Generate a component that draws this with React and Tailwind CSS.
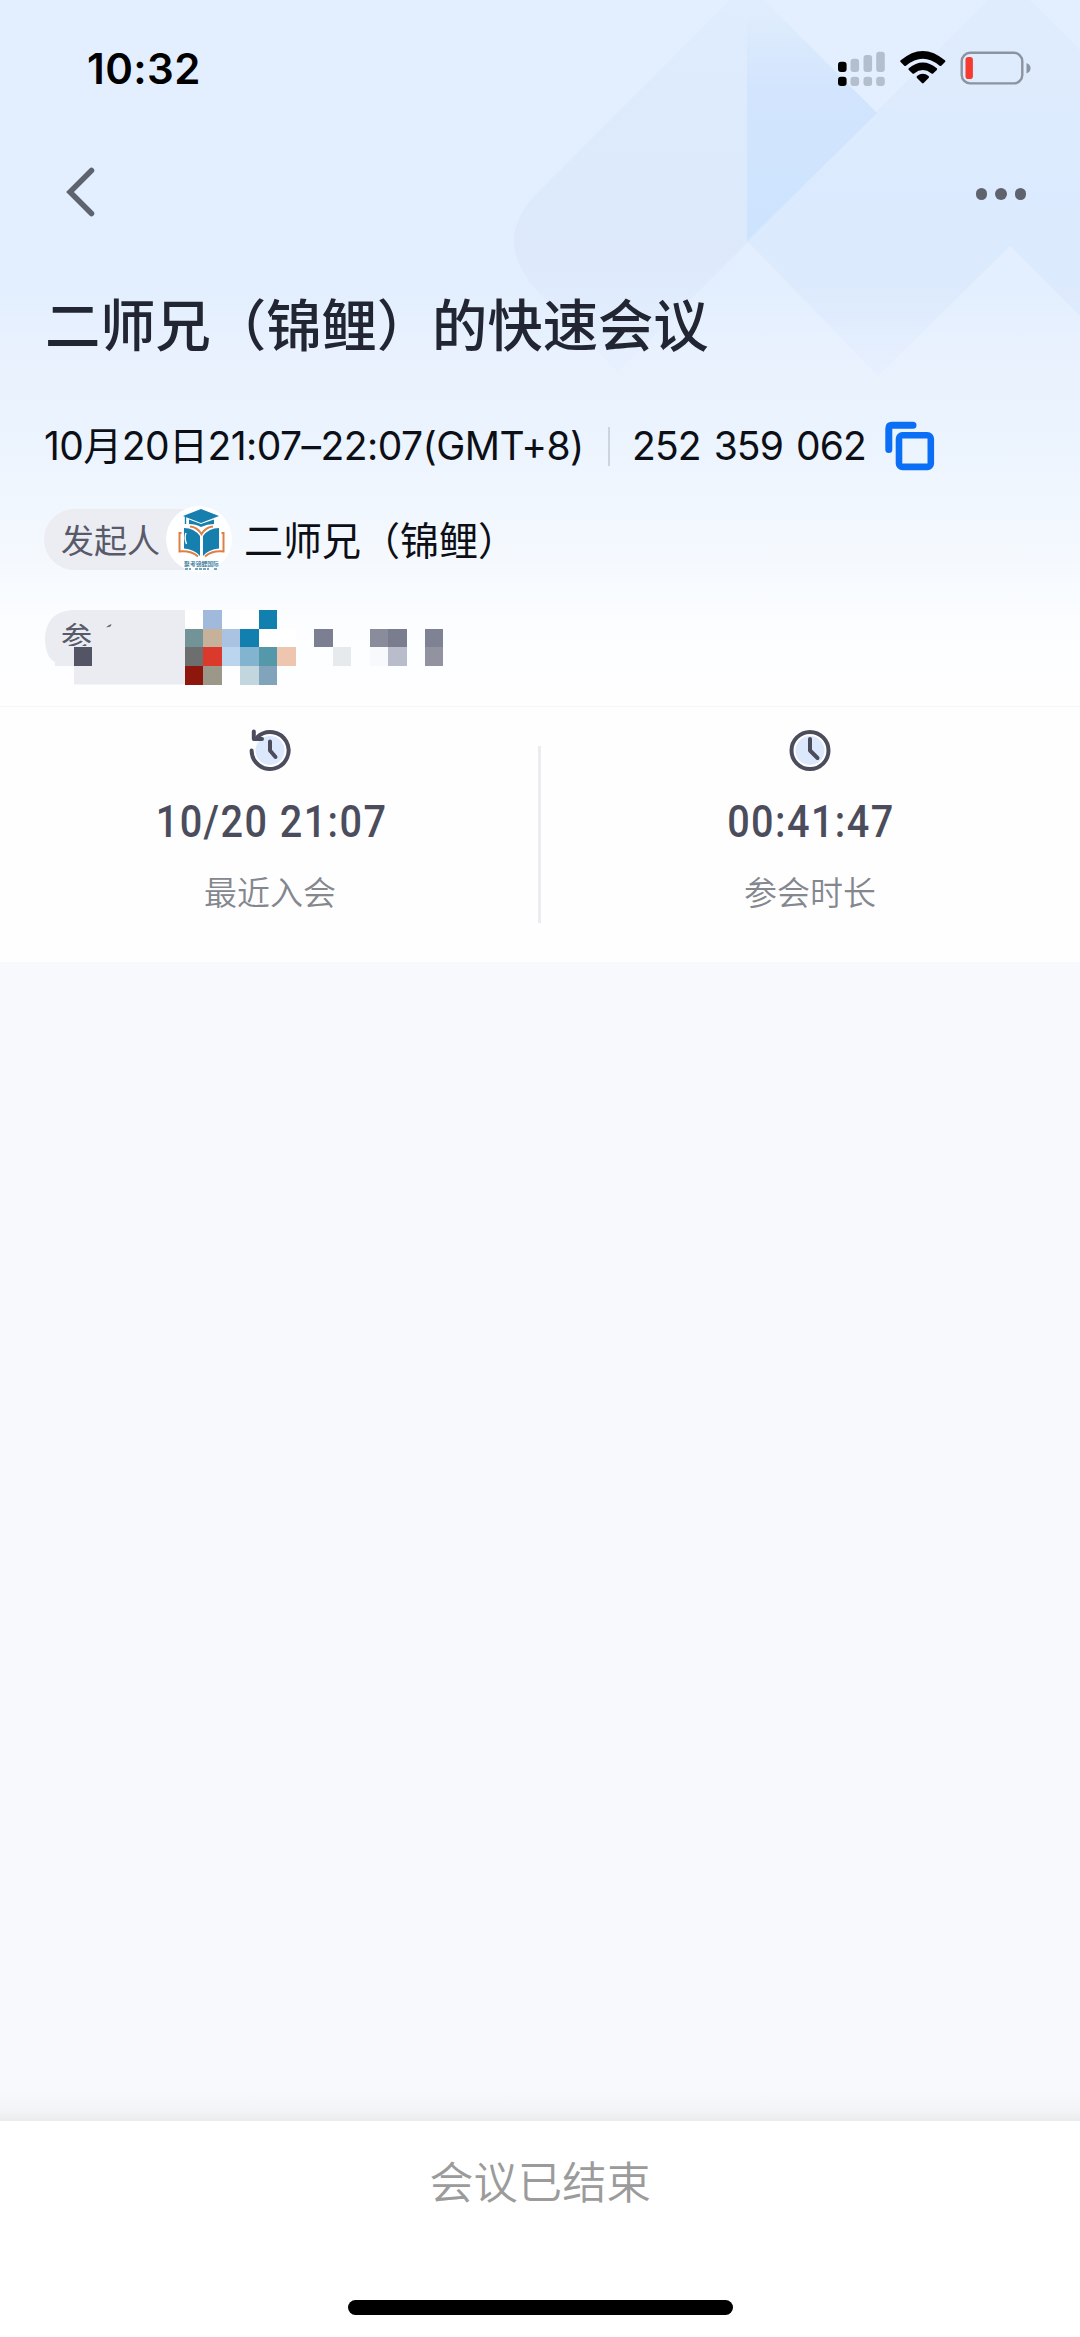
const INK = "#4b4d5c";

function Backdrop() {
  return (
    <svg className="absolute inset-0 h-full w-full" viewBox="0 0 1080 706" fill="none">
      <defs>
        <linearGradient id="band" x1="0" y1="0" x2="0" y2="390" gradientUnits="userSpaceOnUse">
          <stop offset="0" stopColor="#d8e8fb" stopOpacity="0.35" />
          <stop offset="0.25" stopColor="#d8e7fa" stopOpacity="0.55" />
          <stop offset="0.65" stopColor="#d8e5f9" stopOpacity="0.55" />
          <stop offset="0.95" stopColor="#e0edfd" stopOpacity="0.35" />
          <stop offset="1" stopColor="#e4effe" stopOpacity="0" />
        </linearGradient>
        <linearGradient id="bandRight" x1="0" y1="0" x2="0" y2="385" gradientUnits="userSpaceOnUse">
          <stop offset="0" stopColor="#d8e8fb" stopOpacity="0.4" />
          <stop offset="0.5" stopColor="#d6e7fe" stopOpacity="0.6" />
          <stop offset="0.75" stopColor="#d8e7fc" stopOpacity="0.6" />
          <stop offset="1" stopColor="#e2edfe" stopOpacity="0.35" />
        </linearGradient>
        <linearGradient id="facet" x1="0" y1="15" x2="0" y2="241" gradientUnits="userSpaceOnUse">
          <stop offset="0" stopColor="#d0e4fd" stopOpacity="0" />
          <stop offset="0.35" stopColor="#d0e3fe" stopOpacity="0.85" />
          <stop offset="1" stopColor="#cde4fe" />
        </linearGradient>
      </defs>
      <path d="M730 0H764L877 113L618 372L538 292Q490 240 538 192Z" fill="url(#band)" />
      <path d="M988 0H1030L1080 50V316L1010 246L878 376L747 241Z" fill="url(#bandRight)" />
      <path d="M747 0H764L877 113L747 241Z" fill="url(#facet)" />
    </svg>
  );
}

function StatusIcons() {
  const bars = [
    [837.5, 61.7],
    [850, 58.7],
    [863, 55],
    [875.7, 51.7],
  ];
  return (
    <svg className="h-10 w-[200px]" viewBox="834.5 48 200 40" fill="none">
      {bars.map(([x, y], i) => (
        <g key={x} fill={i === 0 ? "#000" : "#b3bfcd"}>
          <rect x={x} y={y} width="8.6" height={72 - y} rx="3" />
          <rect x={x} y="76.7" width="8.6" height="9.3" rx="3" />
        </g>
      ))}
      <path d="M900.2 60.3Q922.3 41.5 944.4 60.3Q945.3 61.2 944.5 62L940.8 65.7Q940 66.5 939.1 65.7Q922.3 51.8 905.5 65.7Q904.6 66.5 903.8 65.7L900.1 62Q899.3 61.2 900.2 60.3Z" fill="#000" />
      <path d="M908.3 68.3Q922.3 56.5 936.3 68.3Q937.1 69.1 936.3 69.9L932.6 73.4Q931.8 74.1 931 73.4Q922.3 66.5 913.6 73.4Q912.8 74.1 912 73.4L908.3 69.9Q907.5 69.1 908.3 68.3Z" fill="#000" />
      <path d="M916.5 76.1Q922.3 71.4 928.1 76.1Q929 77 928.1 77.9L923.1 83Q922.3 83.8 921.5 83L916.5 77.9Q915.6 77 916.5 76.1Z" fill="#000" />
      <rect x="961.2" y="52.8" width="60.6" height="30.6" rx="8.5" stroke="#8b93a0" strokeWidth="2.4" />
      <rect x="965" y="57" width="7.4" height="22" rx="2.8" fill="#f63a30" />
      <path d="M1026 63Q1030 64.5 1030 68.2T1026 73.4Z" fill="#8b93a0" />
    </svg>
  );
}

function CopyIcon() {
  return (
    <svg className="h-[50px] w-[50px]" viewBox="0 0 50 50" fill="none" stroke="#0b6ff6">
      <path d="M3.8 28.5V7.4Q3.8 4.3 6.9 4.3H28" strokeWidth="7" strokeLinecap="round" />
      <rect x="14" y="14.3" width="31.8" height="31.6" rx="3.5" strokeWidth="6.6" />
    </svg>
  );
}

function AvatarLogo() {
  return (
    <svg className="h-[66px] w-[66px] shrink-0" viewBox="0 0 66 66">
      <circle cx="33" cy="33" r="33" fill="#fff" />
      <path d="M35 3L53 10L35 17L17 10Z" fill="#177fae" />
      <path d="M23 13.5L35 18L48 13.5V18Q41 18 35 21Q30 18 23 18Z" fill="#177fae" />
      <path d="M19.5 10.5V18" stroke="#177fae" strokeWidth="1.4" />
      <path d="M18 22Q28 22 34 30V50Q28 43 18 42.5Z" fill="#177fae" />
      <path d="M53 22Q43 22 37 30V50Q43 43 53 42.5Z" fill="#177fae" />
      <path d="M20 27Q18 32 20.5 38" stroke="#fff" strokeWidth="1.4" fill="none" />
      <path d="M24 20.5Q31 21 35.5 28Q40 21 47 20.5" stroke="#dd8044" strokeWidth="2.2" fill="none" />
      <path d="M15.5 27H13.5V45.5Q25 44.5 32 50.5M55.5 27H57.5V45.5Q46 44.5 39 50.5" stroke="#dd8044" strokeWidth="2" fill="none" />
      <text x="35.5" y="60" textAnchor="middle" fontSize="5.8" fontWeight="500" fill="#2a6f94" fontFamily="Noto Sans CJK SC">聚考锦鲤国际</text>
      <path d="M19 63H25M29 63H43M48 63H51" stroke="#4b86a3" strokeWidth="1.4" strokeDasharray="3 1" />
    </svg>
  );
}

function ClockIcon({ history }) {
  return (
    <svg className="h-[46px] w-[46px]" viewBox="0 0 46 46" fill="none" stroke={INK} strokeWidth="4" strokeLinecap="round" strokeLinejoin="round">
      <circle cx="23" cy="23.5" r="14.5" fill="#dce9fd" stroke="none" />
      {history ? (
        <>
          <path d="M4.6 23.5A18.5 18.5 0 1 0 10.5 9.9" />
          <path d="M6.8 4.5V12H15" />
          <path d="M23 14.5V23.5L28.5 30" />
        </>
      ) : (
        <>
          <circle cx="23" cy="23.5" r="18.5" />
          <path d="M23 12V23.5L30.5 31" />
        </>
      )}
    </svg>
  );
}

/* Pixelated cells: [column, row, colour] on an 18.46px grid */
const CELLS = [
  [0, 0, "#ffffff"], [1, 0, "#a1b9db"], [2, 0, "#fdfeff"], [3, 0, "#ffffff"], [4, 0, "#1180ae"],
  [0, 1, "#729498"], [1, 1, "#c6b29b"], [2, 1, "#abc3e3"], [3, 1, "#1180ae"], [4, 1, "#ffffff"], [5, 1, "#ffffff"],
  [7, 1, "#7c7f91"], [10, 1, "#888c9b"], [11, 1, "#797d8d"], [13, 1, "#7f8292"],
  [0, 2, "#6d6e6e"], [1, 2, "#dc392d"], [2, 2, "#bad5ed"], [3, 2, "#82b4cf"], [4, 2, "#5498aa"], [5, 2, "#eec5ae"],
  [8, 2, "#e7eaec"], [10, 2, "#f8f9fc"], [11, 2, "#b9bcca"], [13, 2, "#9193a0"],
  [0, 3, "#8e170d"], [1, 3, "#9b988a"], [3, 3, "#c2d6de"], [4, 3, "#81a3bb"],
];

function ParticipantRow() {
  return (
    <div className="mt-[38px] ml-11 flex h-[75px]">
      <div className="relative h-[75px] w-[141px]">
        <svg className="absolute inset-0 h-full w-full" viewBox="0 0 141 75">
          <path d="M141 0H27Q1 3 1 30Q2 48 11 52V56H30V74.5H141Z" fill="#ebecf1" />
          <path d="M62 17.5Q64 15 67.5 14L66.5 16.5Z" fill="#5b5d6a" />
        </svg>
        <div className="absolute top-[9px] left-[17px] text-[31px] leading-[37px] text-[#585a69]">参</div>
        <div className="absolute top-[36px] left-[14px] h-[16px] w-10 bg-[#ebecf1]" />
        <div className="absolute top-[37px] left-[30px] h-[19px] w-[18px] bg-[#535565]" />
      </div>
      <svg className="h-[75px] w-[259px]" viewBox="0 0 259 75" shapeRendering="crispEdges">
        {CELLS.map(([c, r, fill]) => (
          <rect key={`${c}-${r}`} x={c * 18.46} y={r * 18.6} width="18.5" height="18.7" fill={fill} />
        ))}
      </svg>
    </div>
  );
}

function Stat({ history, value, label }) {
  return (
    <div className="flex flex-1 flex-col items-center pt-[20px]">
      <ClockIcon history={history} />
      <div className="mt-6 h-[50px] origin-center scale-x-[0.9] pl-[3px] font-['Roboto',sans-serif] text-[44px] leading-[50px] font-medium tracking-[1.6px] whitespace-nowrap text-[#4b4d5c]">{value}</div>
      <div className="mt-[26px] h-10 text-[33px] leading-10 font-[350] text-[#85878f]">{label}</div>
    </div>
  );
}

export default function App() {
  return (
    <div className="flex h-[2337px] w-[1080px] flex-col overflow-hidden bg-[#f7f9fc] font-['Inter','Noto_Sans_CJK_SC',sans-serif]">
      <header className="relative h-[706px] bg-[linear-gradient(#e3effe_0px,#e3effe_290px,#e9f1fe_350px,#ebf3fe_430px,#eff6fe_490px,#f5f9fe_560px,#fbfdff_620px,#fefeff_700px)]">
        <Backdrop />
        <div className="relative">
          <div className="flex h-[136px] items-start justify-between pt-12 pr-[45px] pl-[87px]">
            <div className="h-10 text-[42px] leading-[42px] font-semibold tracking-[0.4px] text-black">10:32</div>
            <StatusIcons />
          </div>
          <div className="flex h-[114px] items-center justify-between pr-[54px] pl-16">
            <svg className="h-[52px] w-8" viewBox="0 0 32 52" fill="none" stroke="#5e646f" strokeWidth="5.5" strokeLinecap="round" strokeLinejoin="miter">
              <path d="M27.5 3.5L6 25L27.5 46.5" />
            </svg>
            <div className="flex gap-2 pt-[2px]">
              <span className="h-[11.5px] w-[11.5px] rounded-full bg-[#5f636e]" />
              <span className="h-[11.5px] w-[11.5px] rounded-full bg-[#5f636e]" />
              <span className="h-[11.5px] w-[11.5px] rounded-full bg-[#5f636e]" />
            </div>
          </div>
          <h1 className="mt-9 ml-[45px] h-[78px] text-[55.3px] leading-[80px] font-medium whitespace-nowrap text-[#222632]">二师兄（锦鲤）的快速会议</h1>
          <div className="mt-[52px] ml-11 flex h-[60px] items-center text-[39px] leading-[60px] whitespace-nowrap text-[#0d0f16]">
            <span className="w-[541px] tracking-[-0.55px]">10月20日21:07–22:07(GMT+8)</span>
            <span className="ml-[23px] h-[39px] w-[2px] bg-[#cdd4df]" />
            <span className="ml-[22px] w-[253px] tracking-[-0.9px] [word-spacing:3px]">252 359 062</span>
            <CopyIcon />
          </div>
          <div className="mt-[30px] ml-11 flex h-[66px] items-center">
            <div className="flex h-[61px] w-[141px] shrink-0 items-center rounded-l-full bg-[#ecedf2] pt-[3px] pl-[17px] text-[33px] leading-[58px] whitespace-nowrap text-[#585a69]">发起人</div>
            <div className="-ml-[19px] flex items-center">
              <AvatarLogo />
              <span className="ml-3 pt-1 text-[39px] leading-[60px] whitespace-nowrap text-[#0d0f16]">二师兄（锦鲤）</span>
            </div>
          </div>
          <ParticipantRow />
        </div>
      </header>

      <section className="flex h-[256px] items-start border-t border-[#f5f6f8] bg-[#fefefe]">
        <Stat history value="10/20 21:07" label="最近入会" />
        <div className="mt-[39px] -mr-[3px] h-[177px] w-[3px] -translate-x-[2px] bg-[#ececf0]" />
        <Stat value="00:41:47" label="参会时长" />
      </section>

      <main className="flex-1" />
      <div className="h-[31px] bg-[linear-gradient(#f7f9fc,#f3f4f6_65%,#ebecee)]" />
      <footer className="flex h-[216px] flex-col items-center bg-white">
        <div className="mt-8 h-[60px] text-[44.3px] leading-[60px] font-[350] text-[#9b9b9b]">会议已结束</div>
        <div className="mt-[87px] h-[14.5px] w-[385px] rounded-full bg-black" />
      </footer>
    </div>
  );
}
